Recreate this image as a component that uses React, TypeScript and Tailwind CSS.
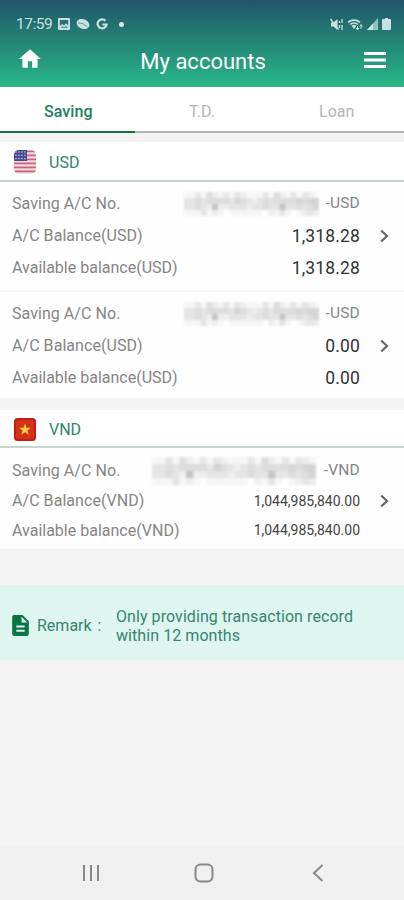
import type { ReactNode } from 'react';
import { MdHome, MdDescription } from 'react-icons/md';

type Account = {
    balance: string;
    available: string;
};

// darkness of each mosaic cell, 0 - 9
const MOSAIC = [
    '113142131321113142131321',
    '334344443543234344445455',
    '334327223332334337334345',
    '111312101111110213101232',
];

function MaskedNumber({ className }: { className: string }) {
    return (
        <svg viewBox="0 0 24 4" preserveAspectRatio="none" className={`blur-[0.8px] ${className}`}>
            {MOSAIC.map((row, y) =>
                row.split('').map((v, x) => (
                    <rect key={`${x}-${y}`} x={x} y={y} width="1.02" height="1.02" fill="#555" opacity={Number(v) * 0.048} />
                ))
            )}
        </svg>
    );
}

function UsFlag() {
    return (
        <svg viewBox="0 0 22 24" className="mt-0.5 h-6 w-[22px]">
            <defs>
                <clipPath id="us">
                    <rect width="22" height="24" rx="5" />
                </clipPath>
            </defs>
            <g clipPath="url(#us)">
                <rect width="22" height="24" fill="#f3dfe4" />
                {[0, 4, 8, 12, 16, 20].map((y) => (
                    <rect key={y} y={y + 0.5} width="22" height="1.8" fill="#cf6176" />
                ))}
                <rect width="13" height="11" fill="#434a8c" />
                {[2, 5, 8, 11].map((x) =>
                    [2, 5.3, 8.6].map((y) => <circle key={`${x}-${y}`} cx={x} cy={y} r="0.8" fill="#c9cfe8" />)
                )}
            </g>
        </svg>
    );
}

function VnFlag() {
    return (
        <svg viewBox="0 0 22 23" className="mt-0.5 h-[23px] w-[22px]">
            <rect width="22" height="23" rx="3.5" fill="#c61d16" />
            <rect x="2" y="2" width="18" height="19" rx="1.5" fill="#d23318" />
            <path d="M11 5.6l1.5 4.2h4.3l-3.4 2.7 1.3 4.2-3.7-2.5-3.7 2.5 1.3-4.2-3.4-2.7h4.3z" fill="#fccb45" />
        </svg>
    );
}

function StatusBar() {
    return (
        <div className="flex h-9 items-end justify-between pl-4 pr-[13px] text-[#c9e0e2]">
            <div className="flex h-6 items-center">
                <span className="w-[42px] pt-0.5 text-[15.5px] tracking-[-0.5px]">17:59</span>
                <svg viewBox="0 0 12 12" className="h-3 w-3">
                    <rect width="12" height="12" rx="1" fill="currentColor" />
                    <path d="M1.8 2h8.4v5.5L8 5.2 6 7.4 4.2 6 1.8 8z" fill="#2d6f78" />
                    <path d="M2.5 10L4.300 8l1.700 1.300L8 7.500l2 2.500z" fill="#5f959c" />
                </svg>
                <svg viewBox="0 0 14 12" className="ml-1.5 h-3 w-3.5">
                    <ellipse cx="7" cy="6" rx="6.6" ry="4.8" transform="rotate(22 7 6)" fill="currentColor" />
                    <path d="M2 5q5-1 9.5 4" fill="none" stroke="#4d8187" strokeWidth=".8" />
                </svg>
                <svg viewBox="0 0 12 12" className="ml-1.5 h-3 w-3">
                    <path d="M9.4 2.7A4.5 4.5 0 1010.600 6.500H6.300" fill="none" stroke="currentColor" strokeWidth="2.2" />
                </svg>
                <span className="ml-[11px] size-[5px] rounded-full bg-[#d5eaea]" />
            </div>
            <div className="flex h-6 items-center">
                <svg viewBox="0 0 13 13" className="h-[13px] w-[13px]">
                    <path d="M1 4.5h2.5L7.5 1v11L3.500 8.500H1z" fill="currentColor" />
                    <path d="M.5 1l8 10.5" fill="none" stroke="currentColor" strokeWidth="1.3" />
                    <path d="M9.5 3v2m0 2v3M12 1v4m0 2v5" fill="none" stroke="currentColor" strokeWidth="1.3" />
                </svg>
                <svg viewBox="0 0 16 13" className="ml-1 h-[13px] w-4">
                    <path d="M1 4.200Q7 0 13 4.200M3 6.400q4-2.800 8 0M5 8.400q2-1.400 4 0" fill="none" stroke="currentColor" strokeWidth="1.7" />
                    <path d="M7 11l2-2.500H5z" fill="currentColor" />
                    <path d="M10.500 12V8M9 10l1.500 2 1.500-2M14 7v4m-1.400-2.500L14 6.500l1.400 2" fill="none" stroke="currentColor" strokeWidth="1" />
                </svg>
                <svg viewBox="0 0 11 12" className="ml-1 h-3 w-[11px]">
                    <path d="M11 0v12H0z" fill="currentColor" opacity=".7" />
                    <path d="M6 5.500V12H0z" fill="currentColor" />
                </svg>
                <svg viewBox="0 0 9 12" className="ml-1 h-3 w-[9px]">
                    <path d="M3 0h3v1h2a1 1 0 011 1v9a1 1 0 01-1 1H1a1 1 0 01-1-1V2a1 1 0 011-1h2z" fill="currentColor" />
                </svg>
            </div>
        </div>
    );
}

function SectionHeader({ flag, label, className }: { flag: ReactNode; label: string; className: string }) {
    return (
        <div className={`flex items-center border-b-2 bg-white pl-3.5 ${className}`}>
            {flag}
            <span className="ml-[13px] pt-1 text-[16px] text-[#2f8467]">{label}</span>
        </div>
    );
}

function Chevron() {
    return (
        <svg viewBox="0 0 9 13" className="absolute left-[368px] top-1/2 h-[13px] w-[9px] -translate-y-1/2">
            <path d="M1.2 1L7 6.5 1.2 12" fill="none" stroke="#666" strokeWidth="2.2" />
        </svg>
    );
}

function UsdAccount({ balance, available }: Account) {
    return (
        <div className="flex flex-col bg-[#fefefe] pl-3 pr-11 text-[16px] text-[#858585]">
            <div className="flex h-8 items-center justify-between">
                <span className="tracking-[0.05px]">Saving A/C No.</span>
                <span className="flex items-center text-[15.5px]">
                    <MaskedNumber className="mr-1.5 h-6 w-[135px]" />
                    <span className="tracking-[0.2px]">-USD</span>
                </span>
            </div>
            <div className="relative -mr-11 flex h-8 items-center justify-between pr-11">
                <span className="tracking-[0.05px]">A/C Balance(USD)</span>
                <span className="text-[17.5px] tracking-[0.15px] text-[#333]">{balance}</span>
                <Chevron />
            </div>
            <div className="flex h-8 items-center justify-between">
                <span>Available balance(USD)</span>
                <span className="text-[17.5px] tracking-[0.15px] text-[#333]">{available}</span>
            </div>
        </div>
    );
}

function VndAccount({ balance, available }: Account) {
    return (
        <div className="flex h-[101px] flex-col bg-[#fefefe] pl-3 pr-11 pt-[7px] text-[16px] text-[#858585]">
            <div className="flex h-[31px] items-center justify-between">
                <span className="tracking-[0.05px]">Saving A/C No.</span>
                <span className="flex items-center text-[15.5px]">
                    <MaskedNumber className="mr-2 h-7 w-[164px]" />
                    <span className="tracking-[0.2px]">-VND</span>
                </span>
            </div>
            <div className="relative -mr-11 flex h-[30px] items-center justify-between pr-11">
                <span className="tracking-[0.05px]">A/C Balance(VND)</span>
                <span className="text-[14px] text-[#444]">{balance}</span>
                <Chevron />
            </div>
            <div className="flex h-[29px] items-center justify-between">
                <span>Available balance(VND)</span>
                <span className="text-[14px] text-[#444]">{available}</span>
            </div>
        </div>
    );
}

export default function App() {
    return (
        <div className="flex h-[900px] w-[404px] flex-col overflow-hidden bg-[#f3f3f3] font-['Roboto',sans-serif]">
            <header className="h-[87px] bg-gradient-to-b from-[#20556a] via-[#248675] to-[#28b989]">
                <StatusBar />
                <div className="grid h-[50px] grid-cols-3 items-center px-[17px] text-white">
                    <MdHome className="size-[26px] -translate-y-0.5" />
                    <h1 className="text-center text-[22px] whitespace-nowrap">My accounts</h1>
                    <svg viewBox="0 0 22 16" className="mr-px h-4 w-[22px] -translate-y-px justify-self-end">
                        <path d="M0 1.5h22M0 8h22M0 14.5h22" stroke="currentColor" strokeWidth="2.8" />
                    </svg>
                </div>
            </header>

            <nav className="grid h-[46px] grid-cols-3 bg-white text-[16px] text-[#b5b5b5]">
                <span className="flex items-center justify-center border-b-2 border-[#127336] pt-1.5 pl-0.5 font-medium tracking-[0.1px] text-[#21805e]">
                    Saving
                </span>
                <span className="flex items-center justify-center border-b-2 border-[#b5b5b5] pt-1.5">T.D.</span>
                <span className="flex items-center justify-center border-b-2 border-[#b5b5b5] pt-1.5">Loan</span>
            </nav>

            <section className="mt-[9px]">
                <SectionHeader flag={<UsFlag />} label="USD" className="h-10 border-[#c3d2cc]" />
                <div className="bg-[#fefefe] pb-1.5 pt-1.5">
                    <UsdAccount balance="1,318.28" available="1,318.28" />
                </div>
                <div className="h-0.5 bg-[#f5f5f5]" />
                <div className="bg-[#fefefe] pb-1 pt-1.5">
                    <UsdAccount balance="0.00" available="0.00" />
                </div>
            </section>

            <section className="mt-3">
                <SectionHeader flag={<VnFlag />} label="VND" className="h-[38px] border-[#c3d8d0]" />
                <VndAccount balance="1,044,985,840.00" available="1,044,985,840.00" />
            </section>

            <section className="mt-9 flex h-[75px] items-center bg-[#dff5ef] pl-2 pt-1.5 text-[16px] text-[#358570]">
                <MdDescription className="size-[25px] text-[#087547]" />
                <span className="ml-1 w-[79px]">
                    Remark<span className="ml-1.5">:</span>
                </span>
                <p className="w-[250px] leading-[19px] tracking-[0.07px]">Only providing transaction record within 12 months</p>
            </section>

            <footer className="mt-auto flex h-[54px] items-center bg-[#f0f0f0] text-[#888]">
                <svg viewBox="0 0 18 18" className="ml-[82px] size-[18px]">
                    <path d="M2 1v16M9 1v16M16 1v16" fill="none" stroke="currentColor" strokeWidth="2" />
                </svg>
                <svg viewBox="0 0 20 20" className="ml-[94px] size-5">
                    <rect x="1.5" y="1.5" width="17" height="17" rx="5" fill="none" stroke="currentColor" strokeWidth="2" />
                </svg>
                <svg viewBox="0 0 12 18" className="ml-[98px] h-[18px] w-3">
                    <path d="M10.5 1L2 9l8.5 8" fill="none" stroke="currentColor" strokeWidth="2" />
                </svg>
            </footer>
        </div>
    );
}
